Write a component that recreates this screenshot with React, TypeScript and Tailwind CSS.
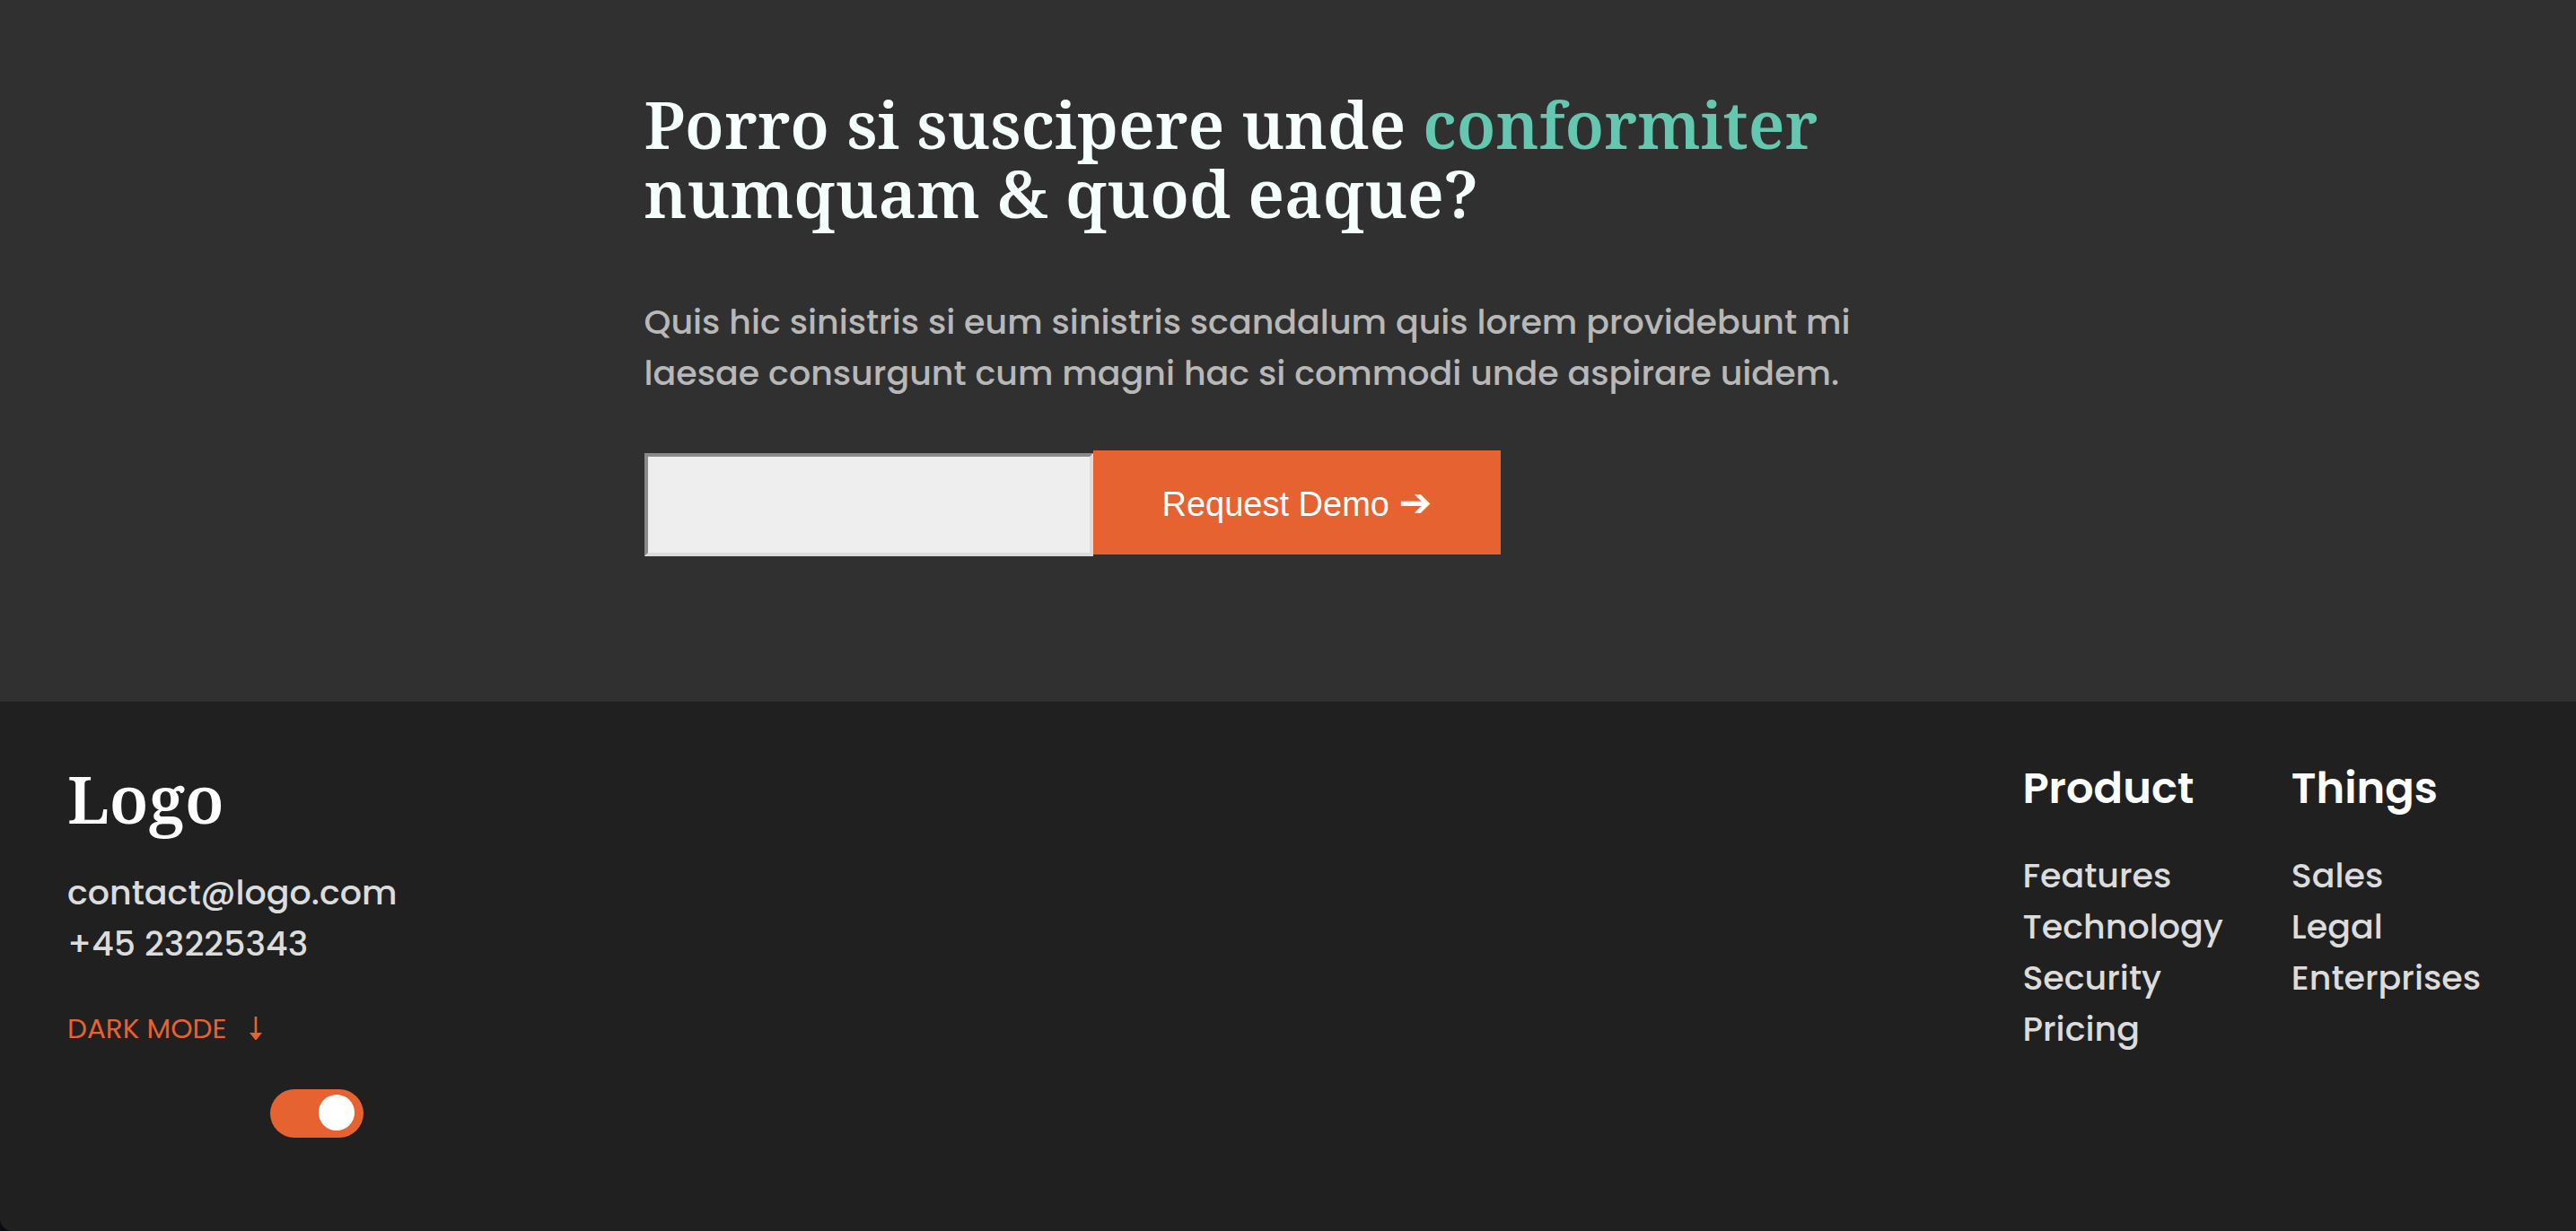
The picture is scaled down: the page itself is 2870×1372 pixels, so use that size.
import { useState } from "react";

const columns = [
  { title: "Product", links: ["Features", "Technology", "Security", "Pricing"] },
  { title: "Things", links: ["Sales", "Legal", "Enterprises"] },
];

function RequestDemo() {
  return (
    <section className="bg-[#303030] pt-[99px] pb-[162px]">
      <div className="mx-auto w-1/2">
        <h2 className="font-['Noto_Serif','Liberation_Serif',serif] text-[73px] leading-[77px] font-semibold text-[#f5fffd]">
          Porro si suscipere unde <span className="text-[#64c8b1]">conformiter</span> numquam &amp; quod eaque?
        </h2>
        <p className="mt-[77px] text-[38px] leading-[57px] font-medium text-[#b8b8b8]">
          Quis hic sinistris si eum sinistris scandalum quis lorem providebunt mi laesae consurgunt cum magni hac si
          commodi unde aspirare uidem.
        </p>
        <form className="mt-[58px] flex items-start" onSubmit={(e) => e.preventDefault()}>
          <input
            type="email"
            aria-label="Email address"
            className="mt-[3px] h-[115px] w-[500px] rounded-none border-4 border-t-[#8a8a8a] border-r-[#dcdcdc] border-b-[#dcdcdc] border-l-[#8a8a8a] bg-[#eeeeee] px-4 font-['Liberation_Sans',sans-serif] text-[38px] text-[#303030]"
          />
          <button
            type="submit"
            className="h-[116px] bg-[#e66230] px-[77px] pt-1 font-['Liberation_Sans','DejaVu_Sans',sans-serif] text-[38px] whitespace-nowrap text-white"
          >
            Request Demo <span className="text-[44px] leading-none">➔</span>
          </button>
        </form>
      </div>
    </section>
  );
}

function DownArrow() {
  return (
    <svg viewBox="0 0 14 26" className="h-[26px] w-[14px]" fill="currentColor" aria-hidden="true">
      <path d="M5.7 0h2.6v18H14L8 25.4Q7 26.4 6 25.4L0 18h5.7z" />
    </svg>
  );
}

function DarkModeSwitch() {
  const [on, setOn] = useState(true);
  return (
    <label className="mt-[43px] block font-normal text-[#e66230]">
      <span className="flex items-center gap-[26px] text-[31px] leading-[46px]">
        DARK MODE
        <DownArrow />
      </span>
      <span className="mt-[45px] ml-[226px] flex h-[54px] w-[104px] items-center rounded-full bg-[#e66230] px-[10px] pb-[2px] has-checked:justify-end">
        <input type="checkbox" checked={on} onChange={(e) => setOn(e.target.checked)} className="sr-only" />
        <span className="size-10 rounded-full bg-white" />
      </span>
    </label>
  );
}

function Footer() {
  return (
    <footer className="flex grow items-start justify-between rounded-bl-[14px] bg-[#202020] pt-[61px] pr-[106px] pb-[104px] pl-[75px] text-[38px] leading-[57px] font-medium text-[#dcdcdc]">
      <div className="pt-[8px]">
        <p className="font-['Noto_Serif','Liberation_Serif',serif] text-[73px] leading-[77px] font-semibold text-white">
          Logo
        </p>
        <address className="mt-[38px] flex flex-col not-italic">
          <a href="mailto:contact@logo.com">contact@logo.com</a>
          <a href="tel:+4523225343">+45 23225343</a>
        </address>
        <DarkModeSwitch />
      </div>
      <nav className="flex gap-[76px]">
        {columns.map((column) => (
          <div key={column.title}>
            <h3 className="text-[48px] leading-[72px] font-semibold text-white">{column.title}</h3>
            <ul className="mt-8">
              {column.links.map((link) => (
                <li key={link}>
                  <a href="#">{link}</a>
                </li>
              ))}
            </ul>
          </div>
        ))}
      </nav>
    </footer>
  );
}

export default function App() {
  return (
    <div className="flex min-h-screen flex-col bg-[#0b0b14] font-['Poppins','Inter',sans-serif]">
      <RequestDemo />
      <Footer />
    </div>
  );
}
